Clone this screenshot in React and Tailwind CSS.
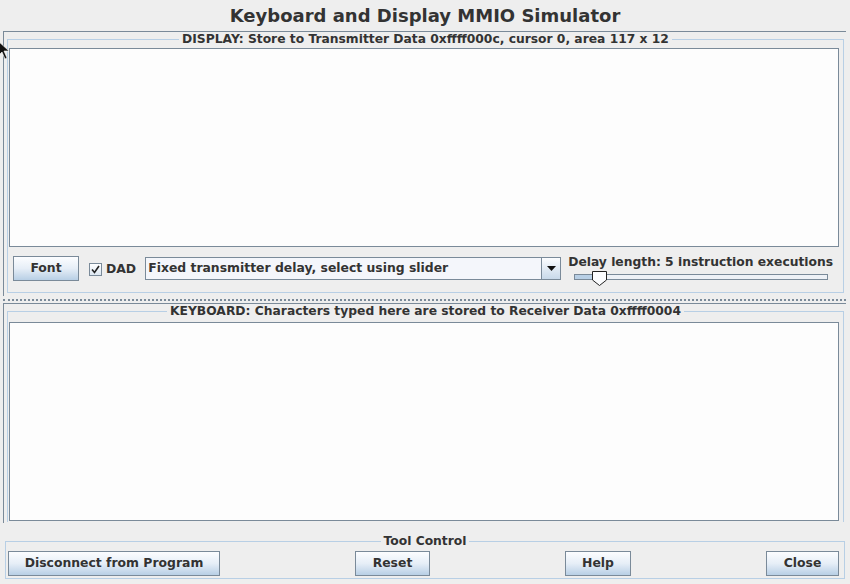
import React from "react";

const FONT = { fontFamily: '"DejaVu Sans", "Liberation Sans", sans-serif' };

function Btn({ children, className = "" }) {
  return (
    <div
      className={
        "flex items-center justify-center border border-[#7a8a99] bg-gradient-to-b from-[#fcfdff] via-[#e6eef7] to-[#b8cfe5] text-[12.4px] font-bold text-[#333333] " +
        className
      }
    >
      {children}
    </div>
  );
}

function TitledLabel({ children }) {
  return (
    <div className="absolute left-0 right-0 -top-[8px] flex justify-center">
      <span className="bg-[#eeeeee] px-[3px] text-[12.3px] font-bold leading-[15px] text-[#333333]">
        {children}
      </span>
    </div>
  );
}

export default function App() {
  return (
    <div
      className="relative flex h-[584px] w-[850px] flex-col overflow-hidden bg-[#eeeeee] text-[#333333]"
      style={FONT}
    >
      {/* Title */}
      <div className="flex h-[31px] items-center justify-center text-[18px] font-bold text-[#333333]">
        Keyboard and Display MMIO Simulator
      </div>

      {/* Display panel */}
      <div className="ml-[3px] flex h-[265px] w-[843px] flex-col border-l border-t border-[#7a8a99]">
        <div className="relative ml-[3px] mt-[7px] flex h-[254px] w-[837px] flex-col border border-[#b8cfe5]">
          <TitledLabel>
            DISPLAY: Store to Transmitter Data 0xffff000c, cursor 0, area 117 x 12
          </TitledLabel>
          <div className="ml-[1px] mt-[8px] h-[199px] w-[830px] border border-[#7a8a99] bg-[#fdfdfd]" />
          <div className="ml-[5px] mt-[9px] flex items-start">
            <Btn className="h-[25px] w-[66px]">Font</Btn>
            <div className="ml-[10px] mt-[7px] flex items-center">
              <div className="flex h-[13px] w-[13px] items-center justify-center border border-[#7a8a99] bg-gradient-to-b from-[#ffffff] to-[#dde7f1]">
                <svg width="9" height="9" viewBox="0 0 9 9">
                  <path d="M1 4.5 L3.5 7.5 L8 1" stroke="#222" strokeWidth="1.6" fill="none" />
                </svg>
              </div>
              <span className="ml-[4px] text-[12.4px] font-bold leading-none">DAD</span>
            </div>
            <div className="ml-[9px] mt-[1px] flex h-[23px] w-[416px] items-stretch border border-[#7a8a99] bg-[#f4f6fb]">
              <div className="flex flex-1 items-center pl-[2px] text-[12.4px] font-bold">
                Fixed transmitter delay, select using slider
              </div>
              <div className="flex w-[19px] items-center justify-center border-l border-[#7a8a99] bg-gradient-to-b from-[#fcfdff] to-[#c8d9ea]">
                <svg width="9" height="5" viewBox="0 0 9 5">
                  <path d="M0 0 L9 0 L4.5 5 Z" fill="#111" />
                </svg>
              </div>
            </div>
            <div className="ml-[6px] -mt-[1px] flex w-[272px] flex-col">
              <div className="pl-[1px] text-[12.3px] font-bold leading-[14px]">
                Delay length: 5 instruction executions
              </div>
              <div className="relative ml-[7px] mt-[5px] h-[6px] w-[254px] border border-[#7a8a99] bg-[#eef1f6]">
                <div className="h-full w-[24px] bg-[#b8cfe5]" />
                <svg
                  className="absolute -top-[5px] left-[16px]"
                  width="17"
                  height="17"
                  viewBox="0 0 17 17"
                >
                  <path
                    d="M1.5 1.5 H15.5 V10 L8.5 15.5 L1.5 10 Z"
                    fill="#fbfcfe"
                    stroke="#222"
                    strokeWidth="1"
                  />
                </svg>
              </div>
            </div>
          </div>
        </div>
      </div>

      {/* Split divider */}
      <div className="ml-[3px] mt-[3px] h-[2px] w-[843px] border-t-2 border-dotted border-[#7a8a99]" />

      {/* Keyboard panel */}
      <div className="ml-[3px] mt-[2px] flex h-[220px] w-[843px] flex-col border-l border-t border-[#7a8a99]">
        <div className="relative ml-[3px] mt-[7px] flex h-[211px] w-[837px] flex-col border-l border-r border-t border-[#b8cfe5]">
          <TitledLabel>
            KEYBOARD: Characters typed here are stored to Receiver Data 0xffff0004
          </TitledLabel>
          <div className="ml-[1px] mt-[10px] h-[199px] w-[830px] border border-[#7a8a99] bg-[#fdfdfd]" />
        </div>
      </div>

      {/* Tool control */}
      <div className="relative ml-[5px] mt-[18px] flex h-[38px] w-[840px] items-start border border-[#b8cfe5]">
        <TitledLabel>Tool Control</TitledLabel>
        <div className="mt-[9px] flex w-full items-start">
          <Btn className="ml-[2px] h-[25px] w-[212px]">Disconnect from Program</Btn>
          <Btn className="ml-[135px] h-[25px] w-[75px]">Reset</Btn>
          <Btn className="ml-[135px] h-[25px] w-[66px]">Help</Btn>
          <Btn className="ml-[135px] h-[25px] w-[73px]">Close</Btn>
        </div>
      </div>

      {/* Mouse cursor */}
      <svg className="absolute left-0 top-[41px]" width="12" height="20" viewBox="0 0 12 20">
        <path d="M-2 0 L-2 15 L2 11 L5 18 L7 17 L4 10 L9 10 Z" fill="#111" stroke="#fff" strokeWidth="0.6" />
      </svg>
    </div>
  );
}
